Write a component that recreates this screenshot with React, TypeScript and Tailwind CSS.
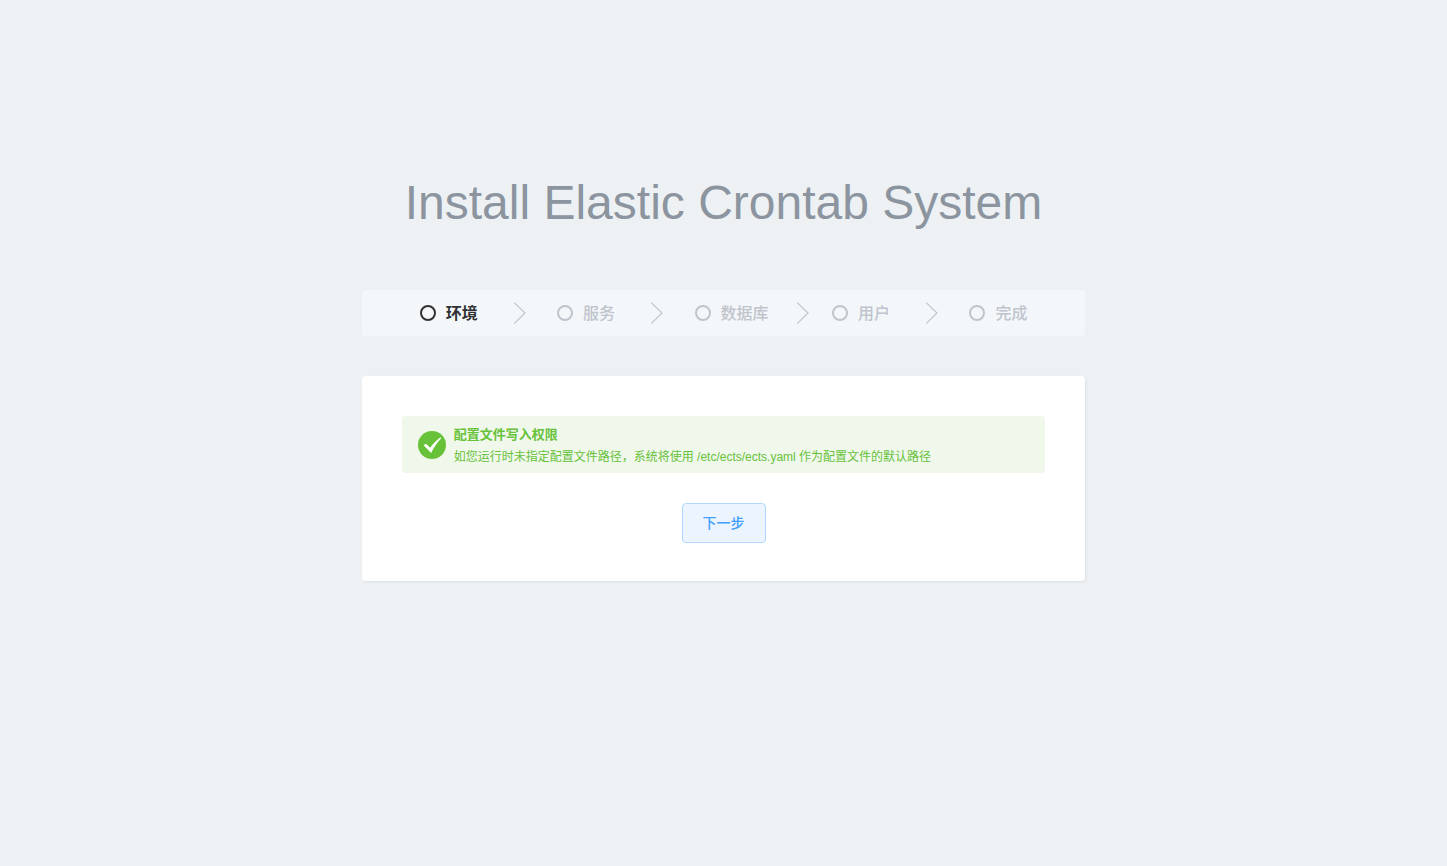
const steps = ["环境", "服务", "数据库", "用户", "完成"];

function StepArrow() {
  return (
    <span className="flex flex-1 justify-center" aria-hidden="true">
      <svg width="17" height="22" viewBox="0 0 17 22" fill="none" stroke="#c0c4cc" strokeWidth="1.2">
        <path d="M5.2 0.6 L16 11 L5.2 21.6" />
      </svg>
    </span>
  );
}

function SuccessIcon() {
  return (
    <svg className="shrink-0" width="28" height="28" viewBox="0 0 28 28" aria-hidden="true">
      <circle cx="14" cy="14" r="14" fill="#67c23a" />
      <path
        d="M5.6 14.3 L8 12.8 L12.2 16.8 C15 12.6 18.6 9 22.6 6.3 L23.2 7.3 C19.3 11.4 16 16.4 13.1 22 Z"
        fill="#fff"
      />
    </svg>
  );
}

export default function App() {
  return (
    <main className="min-h-screen bg-[#edf1f4] pt-[173px] font-['Liberation_Sans','Noto_Sans_CJK_SC',sans-serif]">
      <div className="mx-auto w-1/2">
        <h1 className="text-center text-5xl leading-[60px] whitespace-nowrap text-[#8c959f]">
          Install Elastic Crontab System
        </h1>

        <ol className="mt-[57px] flex items-center rounded-sm bg-[#f3f7fa] px-[8%] py-3">
          {steps.map((name, index) => (
            <li
              key={name}
              aria-current={index === 0 ? "step" : undefined}
              className={
                index === 0
                  ? "flex flex-1 items-center font-bold text-[#303133]"
                  : index === steps.length - 1
                    ? "flex items-center font-medium text-[#c0c4cc]"
                    : "flex flex-1 items-center font-medium text-[#c0c4cc]"
              }
            >
              <span className="mr-2.5 size-4 shrink-0 rounded-full border-2 border-current" />
              <span className="pt-0.5 text-base leading-5 whitespace-nowrap">{name}</span>
              {index < steps.length - 1 && <StepArrow />}
            </li>
          ))}
        </ol>

        <section className="mt-10 rounded-sm bg-white px-10 pt-10 pb-[38px] shadow-[1px_1px_3px_rgba(0,0,0,0.08)]">
          <div role="status" className="flex items-center rounded-sm bg-[#f0f7eb] px-4 py-2 text-[#67c23a]">
            <SuccessIcon />
            <div className="px-2 pt-0.5">
              <h2 className="text-[13px] leading-[18px] font-bold">配置文件写入权限</h2>
              <p className="mt-[5px] text-xs leading-4">
                如您运行时未指定配置文件路径，系统将使用 /etc/ects/ects.yaml 作为配置文件的默认路径
              </p>
            </div>
          </div>
          <div className="mt-[30px] flex justify-center">
            <button
              type="button"
              className="h-10 rounded-sm border border-[#b3d8ff] bg-[#ecf5ff] px-5 text-sm font-medium text-[#409eff]"
            >
              下一步
            </button>
          </div>
        </section>
      </div>
    </main>
  );
}
